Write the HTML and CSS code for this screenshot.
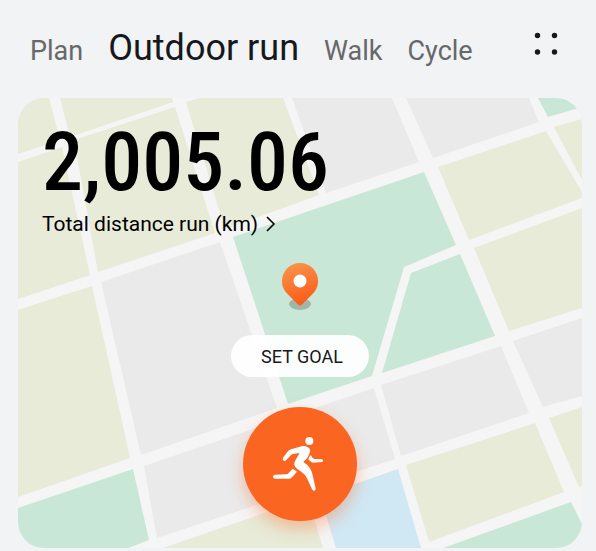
FILE: index.html
```
<!DOCTYPE html>
<html lang="en">
<head>
  <meta charset="utf-8">
  <meta name="viewport" content="width=device-width, initial-scale=1.0">
  <title>Outdoor run</title>
  <link rel="stylesheet" href="styles.css">
</head>
<body>
  <header class="topbar">
    <nav class="tabs">
      <a class="tab" href="#plan">Plan</a>
      <a class="tab active" href="#outdoor" aria-current="page">Outdoor run</a>
      <a class="tab" href="#walk">Walk</a>
      <a class="tab" href="#cycle">Cycle</a>
    </nav>
    <button class="menu" aria-label="More">
      <svg width="24" height="24" viewBox="0 0 24 24" fill="#16181a">
        <circle cx="3.500" cy="3.500" r="2.700"/>
        <circle cx="20.500" cy="3.500" r="2.700"/>
        <circle cx="3.500" cy="20" r="2.700"/>
        <circle cx="20.500" cy="20" r="2.700"/>
      </svg>
    </button>
  </header>

  <main class="card">
    <svg class="map" viewBox="18 98 564 450" preserveAspectRatio="xMidYMid slice" aria-hidden="true">
      <g fill="#e7ebd8">
        <polygon points="18,98 49,98 60,140 18,154"/>
        <polygon points="60,98 172,98 173,102 70,137"/>
        <polygon points="186,102 200,98 283,98 319,195 225,229"/>
        <polygon points="74,140 175,107 215,233 98,272"/>
        <polygon points="18,162 62,147 90,275 18,299"/>
        <polygon points="18,310 92,286 130,458 18,497"/>
        <polygon points="582,119 554,127 582,180"/>
        <polygon points="438,167 546,131 582,192 582,198 469,240"/>
        <polygon points="474,248 582,208 582,308 509,331"/>
        <polygon points="406,465 535,423 564,492 429,542"/>
        <polygon points="549,418 582,407 582,486 579,487"/>
        <polygon points="163,548 308,498 323,548"/>
      </g>
      <g fill="#eaeaea">
        <polygon points="101,282 220,242 277,408 141,455"/>
        <polygon points="292,98 392,98 419,162 326,193"/>
        <polygon points="406,98 529,98 539,122 433,158"/>
        <polygon points="513,341 582,318 582,396 543,407"/>
        <polygon points="381,385 501,346 529,413 401,456"/>
        <polygon points="144,466 374,388 395,459 157,538"/>
      </g>
      <g fill="#c9e7d6">
        <polygon points="233,237 424,172 456,245 404,267 372,376 288,404"/>
        <polygon points="411,273 460,254 495,336 382,373"/>
        <polygon points="538,98 582,98 582,107 548,117"/>
        <polygon points="18,508 133,469 149,540 128,548 18,548"/>
        <polygon points="443,548 571,502 582,524 582,548"/>
      </g>
      <polygon fill="#d0e8f3" points="320,496 398,469 421,548 336,548"/>
    </svg>

    <section class="summary">
      <div class="distance">2,005.06</div>
      <a class="caption" href="#history">Total distance run (km)
        <svg width="10" height="16" viewBox="0 0 10 16" fill="none" stroke="#000" stroke-width="1.6">
          <path d="M1 1l7 7-7 7"/>
        </svg>
      </a>
    </section>

    <section class="actions">
      <svg class="pin" width="38" height="48" viewBox="0 0 38 48" aria-hidden="true">
        <defs>
          <linearGradient id="pinFill" x1="0" y1="0" x2="0.3" y2="1">
            <stop offset="0" stop-color="#f9994f"/>
            <stop offset="1" stop-color="#fb5d1a"/>
          </linearGradient>
        </defs>
        <ellipse cx="19" cy="41" rx="11" ry="6" fill="#9fb6a9"/>
        <path fill="url(#pinFill)" d="M19 0C9 0 1 8 1 18c0 6 2.500 10 6.500 14l9.500 9.500q2 1.800 4 0L30.500 32C34.500 28 37 24 37 18 37 8 29 0 19 0z"/>
        <circle cx="19" cy="18" r="6.500" fill="#fff"/>
      </svg>
      <button class="goal">SET GOAL</button>
      <button class="start" aria-label="Start run">
        <svg width="80" height="78" viewBox="0 0 240 234" fill="#fff">
          <circle cx="148" cy="48" r="12"/>
          <path d="M69 106q-2-4 1-9l12-16q4-6 11-8l32-9q8-2 16 1 12 5 9 16l-5 12q-3 7-9 12l-6 6q15 9 21 20 5 9 7 20l9 40q0 6-5 6-4 0-6-4l-15-33q-6-13-17-20l-12-8q-11-8-9-18 1-5 4-10l12-20-20 3q-5 1-8 5l-12 13q-5 6-10 1z"/>
          <path d="M98 131l13 9-16 18q-4 3-9 3H44q-5-1-5-6t5-6l36-1q3 0 5-3z"/>
          <path d="M152 90l6 9q2 2 5 3l23 1q3 1 3 4t-3 4l-26 2q-5 0-9-4l-6-6q1-7 7-13z"/>
        </svg>
      </button>
    </section>
  </main>
</body>
</html>
```
FILE: styles.css
```
* {
  box-sizing: border-box;
}
body {
  margin: 0;
  min-height: 100vh;
  padding: 0 14px 3px 18px;
  display: flex;
  flex-direction: column;
  background: #f1f3f5;
  color: #16181a;
  font-family: Roboto, "Liberation Sans", sans-serif;
}
button {
  border: none;
  padding: 0;
  font-family: inherit;
  color: inherit;
  cursor: pointer;
}
a {
  color: inherit;
  text-decoration: none;
}
.topbar {
  display: flex;
  align-items: flex-start;
  justify-content: space-between;
  padding: 24px 24px 23px 12px;
}
.tabs {
  display: flex;
  align-items: baseline;
  gap: 25px;
  line-height: 48px;
}
.tab {
  font-size: 27px;
  color: #66686a;
  white-space: nowrap;
}
.tab.active {
  font-size: 36px;
  color: #16181a;
}
.menu {
  display: flex;
  margin-top: 8px;
  background: none;
}
.card {
  position: relative;
  flex: 1;
  display: flex;
  flex-direction: column;
  justify-content: space-between;
  padding: 20px 24px 27px;
  border-radius: 26px;
  overflow: hidden;
  background: #f5f5f5;
}
.map {
  position: absolute;
  inset: 0;
  width: 100%;
  height: 100%;
}
.summary,
.actions {
  position: relative;
}
.distance {
  font-family: "Roboto Condensed", Roboto, sans-serif;
  font-size: 82px;
  font-weight: 500;
  line-height: 88px;
  color: #000;
}
.caption {
  display: flex;
  align-items: center;
  gap: 8px;
  margin-top: 4px;
  font-size: 21px;
  line-height: 28px;
  color: #000;
}
.actions {
  display: flex;
  flex-direction: column;
  align-items: center;
}
.goal {
  height: 42px;
  margin: 24px 0 30px;
  padding: 0 26px 0 30px;
  border-radius: 21px;
  background: rgba(255, 255, 255, 0.93);
  font-size: 18px;
}
.start {
  display: flex;
  align-items: center;
  justify-content: center;
  width: 114px;
  height: 114px;
  border-radius: 50%;
  background: #fb6522;
  box-shadow: 0 8px 16px rgba(251, 101, 34, 0.35);
}
```
